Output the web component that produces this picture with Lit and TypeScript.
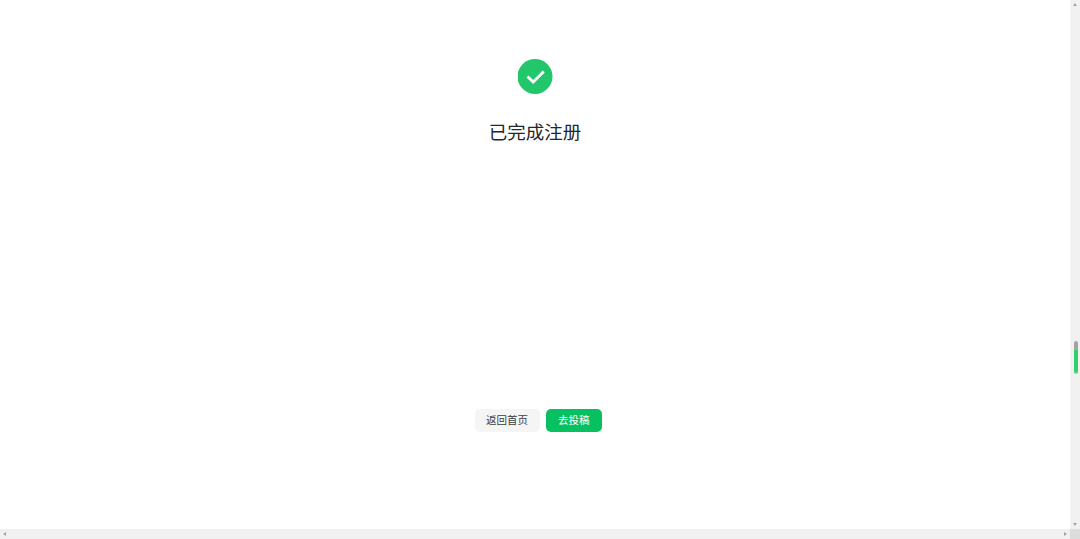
import { LitElement, html, css } from "lit";
import { customElement } from "lit/decorators.js";

@customElement("app-root")
export class AppRoot extends LitElement {
  static styles = css`
    :host { display: block; width: 1080px; height: 539px; overflow: hidden; background: #fff;
      font-family: "Liberation Sans", "Noto Sans CJK SC", sans-serif; }
    .frame { display: grid; grid-template-columns: 1070px 10px; grid-template-rows: 529px 10px; width: 1080px; height: 539px; }
    .page { display: flex; flex-direction: column; align-items: center; padding-top: 59px; box-sizing: border-box; }
    .icon { display: block; width: 35px; height: 35px; }
    h1 { margin: 27px 0 0; font-size: 18.5px; line-height: 24px; font-weight: 400; color: #23282e; }
    .actions { display: flex; gap: 6.5px; margin-top: 264px; margin-left: 6px; }
    button { height: 23px; border: 0; border-radius: 5px; padding: 0; font: inherit; font-size: 10.5px; line-height: 23px; text-align: center; }
    .secondary { width: 65px; background: #f5f5f5; color: #3c3c3c; }
    .primary { width: 55.5px; background: #07c160; color: #fff; }
    .vbar { position: relative; background: #f1f1f1; }
    .hbar { background: #f1f1f1; display: flex; justify-content: space-between; align-items: center; padding: 0 3px; }
    .corner { background: #dcdcdc; }
    .thumb { position: absolute; left: 4px; top: 341px; width: 4px; height: 33px; border-radius: 2px;
      background: linear-gradient(#a3a3a3 0 9px, #2fd070 9px 30px, #8be4ae 100%); }
    .arrow { position: absolute; left: 3px; width: 4px; height: 3px; }
    .up { top: 3px; }
    .down { bottom: 3px; }
    .arrow-h { display: block; width: 3px; height: 4px; }
    svg.a { fill: #a3a3a3; }
  `;

  render() {
    return html`
      <div class="frame">
        <main class="page">
          <svg class="icon" viewBox="0.5 0 35 35" aria-hidden="true">
            <circle cx="17.5" cy="17.5" r="17.5" fill="#22c76c"></circle>
            <path d="M10 17.6l5.7 5.5L26.2 12.6" fill="none" stroke="#fff" stroke-width="2.8"></path>
          </svg>
          <h1>已完成注册</h1>
          <div class="actions">
            <button class="secondary">返回首页</button>
            <button class="primary">去投稿</button>
          </div>
        </main>
        <div class="vbar">
          <svg class="arrow up a" viewBox="0 0 4 3"><path d="M2 0l2 3H0z"></path></svg>
          <div class="thumb"></div>
          <svg class="arrow down a" viewBox="0 0 4 3"><path d="M0 0h4L2 3z"></path></svg>
        </div>
        <div class="hbar">
          <svg class="arrow-h a" viewBox="0 0 3 4"><path d="M3 0v4L0 2z"></path></svg>
          <svg class="arrow-h a" viewBox="0 0 3 4"><path d="M0 0v4l3-2z"></path></svg>
        </div>
        <div class="corner"></div>
      </div>
    `;
  }
}
